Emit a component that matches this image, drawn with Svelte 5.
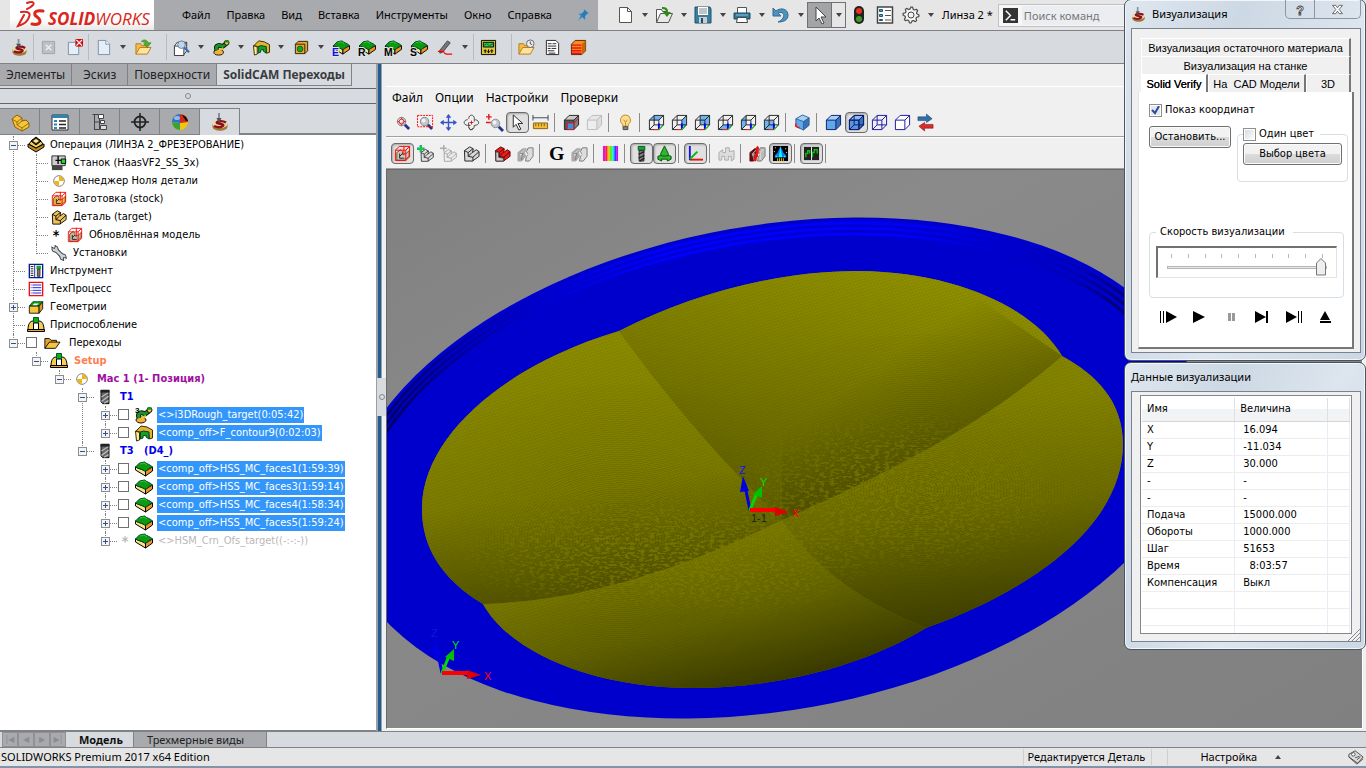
<script>
	let command = $state('');
	let speed = $state(9);
	let showCoordinates = $state(true);
	let oneColor = $state(false);

	const menu = ['Файл', 'Правка', 'Вид', 'Вставка', 'Инструменты', 'Окно', 'Справка'];
	const viewerMenu = ['Файл', 'Опции', 'Настройки', 'Проверки'];
	const ribbonTabs = ['Элементы', 'Эскиз', 'Поверхности', 'SolidCAM Переходы'];
	const panelTabs = ['part', 'props', 'config', 'origin', 'appearance', 'cam'];

	// '|' is a separator, '||' a wide one, 'v' a drop-down arrow
	const quickTools = ['new', 'v', 'openArrow', 'v', 'save', 'v', 'print', 'v', 'undo', 'v'];
	const camTools = [
		'cam', '|', 'closeOff', 'docClose', '|', 'doc', 'v', 'folderArrow', '||',
		'inspect', 'v', 'robot', 'v', 'arch', 'v', 'hole', 'v',
		'slabE', 'slabR', 'slabM', 'slabS', 'pencil', 'v', '|', 'device', '||',
		'folderClock', 'sheet', 'stack'
	];
	const viewTools = [
		'zoomFit', 'zoomArea', 'pan', 'rotate', 'zoomInOut', 'pointer*', 'ruler', '|',
		'section', 'sectionOff', '|', 'bulb', '|',
		'viewTop', 'viewRight', 'viewBack', 'viewBottom', 'viewLeft', 'viewFront', '|',
		'viewIso', '|', 'shaded', 'shadedEdges*', 'wire', 'hidden', 'swap'
	];
	const simTools = [
		'stockBox*', 'partAdd', 'partAddOff', 'partGray', '|', 'partRed', 'partsOff', '|',
		'gouge', 'partsOff', '|', 'rainbow', '|', 'tool*', 'holder*', '|', 'axes*', '|',
		'clampOff', '|', 'compare', 'rocket*', '|', 'chart*', '|'
	];

	const tree = [
		{
			label: 'Операция (ЛИНЗА 2_ФРЕЗЕРОВАНИЕ)', icon: 'operation', open: true,
			children: [
				{ label: 'Станок (HaasVF2_SS_3x)', icon: 'machine' },
				{ label: 'Менеджер Ноля детали', icon: 'zero' },
				{ label: 'Заготовка (stock)', icon: 'stock' },
				{ label: 'Деталь (target)', icon: 'target' },
				{ label: 'Обновлённая модель', icon: 'updated', star: true },
				{ label: 'Установки', icon: 'wrench' }
			]
		},
		{ label: 'Инструмент', icon: 'toolTable' },
		{ label: 'ТехПроцесс', icon: 'process' },
		{ label: 'Геометрии', icon: 'geometry', closed: true },
		{ label: 'Приспособление', icon: 'fixture' },
		{
			label: 'Переходы', icon: 'folder', open: true, check: true, indent: true,
			children: [
				{
					label: 'Setup', icon: 'fixture', kind: 'setup', open: true,
					children: [
						{
							label: 'Mac 1 (1- Позиция)', icon: 'zero', kind: 'mac', open: true,
							children: [
								{
									label: 'T1', icon: 'mill', kind: 'cutter', open: true,
									children: [
										{ label: '<>i3DRough_target(0:05:42)', icon: 'rough', kind: 'selected', closed: true, check: true },
										{ label: '<comp_off>F_contour9(0:02:03)', icon: 'arch', kind: 'selected', closed: true, check: true }
									]
								},
								{
									label: 'T3   (D4_)', icon: 'mill', kind: 'cutter', open: true,
									children: [
										{ label: '<comp_off>HSS_MC_faces1(1:59:39)', icon: 'slab', kind: 'selected', closed: true, check: true },
										{ label: '<comp_off>HSS_MC_faces3(1:59:14)', icon: 'slab', kind: 'selected', closed: true, check: true },
										{ label: '<comp_off>HSS_MC_faces4(1:58:34)', icon: 'slab', kind: 'selected', closed: true, check: true },
										{ label: '<comp_off>HSS_MC_faces5(1:59:24)', icon: 'slab', kind: 'selected', closed: true, check: true },
										{ label: '<>HSM_Crn_Ofs_target((-:-:-))', icon: 'slab', kind: 'off', closed: true, star: true }
									]
								}
							]
						}
					]
				}
			]
		}
	];

	const readings = [
		['X', '16.094'],
		['Y', '-11.034'],
		['Z', '30.000'],
		['-', '-'],
		['-', '-'],
		['Подача', '15000.000'],
		['Обороты', '1000.000'],
		['Шаг', '51653'],
		['Время', '  8:03:57'],
		['Компенсация', 'Выкл'],
		['', ''],
		['', ''],
		['', '']
	];

	const playback = ['stepPlay', 'play', 'pause', 'next', 'playEnd', 'eject'];

	// Icons, all on an 18x18 grid
	const wideIcons = ['operation', 'fixture', 'rough', 'arch', 'slab'];
	const cube = (stroke, fills = '') =>
		`${fills}<path d="M1.5 6.5h10v10h-10zM6.5 1.5h10v10h-10zM1.5 6.5l5-5M11.5 6.5l5-5M1.5 16.5l5-5M11.5 16.5l5-5" fill="none" stroke="${stroke}"/>`;
	const solid = (stroke, a, b, c) =>
		`<path d="M1.5 6.5l5-5h10l-5 5z" fill="${a}"/><path d="M1.5 6.5h10v10h-10z" fill="${b}"/><path d="M11.5 6.5l5-5v10l-5 5z" fill="${c}"/><path d="M1.5 6.5l5-5h10v10l-5 5h-10zM1.5 6.5h10v10M11.5 6.5l5-5" fill="none" stroke="${stroke}"/>`;
	const face = (d) =>
		cube('#222', `<path d="${d}" fill="#6fb2ee"/>`) +
		'<path d="M11.5 10v6.5" stroke="#00f" stroke-width="2"/><path d="M6 16.5h6" stroke="#f22"/><path d="M11.5 16.5l3-3" stroke="#0d0" stroke-width="1.5"/>';
	const slab =
		'<path d="M.5 7v3l10 6v-5z" fill="#fbe47e" stroke="#000"/><path d="M10.5 11v5l7-5V7z" fill="#ee9420" stroke="#000"/><path d="M.5 7l4-4 5-1c2 2 5 2 8 5l-3 1-3 3h-2c-2-2-6-2-9-4z" fill="#0c9a10" stroke="#043"/><path d="M5 4l4-1 3 2" fill="none" stroke="#2ad02a"/>';
	const slabWith = (letter, color) =>
		slab +
		`<text x="-1" y="18" font-size="11" font-weight="700" font-family="Liberation Sans, sans-serif" fill="${color}" stroke="#dfe3e8" stroke-width="2" paint-order="stroke">${letter}</text>`;
	const part = (fill, stroke) =>
		`<path d="M1.5 6l5.500-4 4 2-1 4 4-3 3 2v5l-7 5h-8z" fill="${fill}" stroke="${stroke}"/><path d="M1.5 6l4 2v4l5 1 6.500-6M10.500 13v4M5.500 8l5-4M5.500 12l4-4" fill="none" stroke="${stroke}"/>`;
	const boxed = (fill) =>
		`<path d="M3 8l4-3 2 2v3l4-1 3-3v6l-5 4H3z" fill="${fill}" stroke="#7a4a00"/><path d="M6 9v5h5M6 12l3-3" fill="none" stroke="#222"/><path d="M1.500 5.500h11v11h-11zM1.500 5.500l4-4h11l-4 4M16.500 1.500v11l-4 4M10.500 1v10" fill="none" stroke="#f00"/>`;
	const lens =
		'<circle cx="8" cy="8" r="4.500" fill="#c3c6cc" stroke="#8a8a8a"/><circle cx="7" cy="7" r="2" fill="#f4f4f6"/><path d="M11.500 11.500l4.500 4.500" stroke="#26328c" stroke-width="3"/>';
	const page =
		'<path d="M3.500 1.500h8l4 4v11h-12z" fill="#fff" stroke="#555"/><path d="M11.500 1.500v4h4" fill="none" stroke="#555"/>';
	const folder =
		'<path d="M1 16V5h5l1 2h6v3" fill="#f5bd45" stroke="#b9791a"/><path d="M1 16l4-7h12l-4 7z" fill="#ffe39a" stroke="#b9791a"/>';
	const disc =
		'<path d="M1.500 11v3c1 5 14 5 15 0v-3z" fill="#a07a3a"/><ellipse cx="9" cy="11" rx="7.500" ry="4" fill="#e9d9a6"/><path d="M15 9.500c-3-2-8-1.500-9-.5s1 1.500 4 2 3 1.500 1 2.500-5 1-8-.5" fill="none" stroke="#8e1018" stroke-width="2.400"/><path d="M8 0v5" stroke="#8a9096" stroke-width="2"/><path d="M8 10L5.500 5h5z" fill="#4c5258"/>';
	const robot =
		'<ellipse cx="6" cy="14" rx="5" ry="3" fill="#f3b13c" stroke="#111"/><path d="M4 12c-2-6 3-6 6-4l4-3" fill="none" stroke="#111" stroke-width="5"/><path d="M4 12c-2-6 3-6 6-4l4-3" fill="none" stroke="#129a20" stroke-width="3"/><path d="M6 12l5-2" stroke="#f0c040" stroke-width="2"/><circle cx="14.500" cy="4" r="2.500" fill="#f2c13b" stroke="#111"/><path d="M12.500 2.500h4" stroke="#129a20" stroke-width="2.500"/>';
	const arch =
		'<path d="M1 7l5-5 6 1 5.500 3v8l-3 1-1-7H5z" fill="#e5b32e" stroke="#3a2a00"/><path d="M5.500 15V8l3-1 5.500 1v7l-3-2v-2l-3 1v2z" fill="#13a51c" stroke="#043"/><path d="M.5 7l4 1.500V16l-3 1z" fill="#ffef98" stroke="#3a2a00"/>';
	const halfParts = (a, b) =>
		`<path d="M1 8l5-4 4 0-2 4 1 4-4 5H1z" fill="${a}" stroke="${a}"/><path d="M3 9h3l-1 3v4M12 3l5 0v9l-4 5H9l1-5 2-2-2-3z" fill="${b}" stroke="#777"/><path d="M4 9l4-4M12 8l4-4M12 8v8" stroke="#ddd" fill="none"/>`;
	const zero =
		'<circle cx="9" cy="9" r="6" fill="#fff" stroke="#777"/><path d="M9 9V3.500A5.500 5.500 0 0 1 14.500 9zM9 9v5.500A5.500 5.500 0 0 1 3.500 9z" fill="#f0b51c"/>';
	const fixture =
		'<path d="M1 14c0-6 2-9 5-9h6c3 0 5 3 5 9z" fill="#f4cf54" stroke="#000"/><path d="M6.500 7h5v7h-5z" fill="#fff" stroke="#000"/><path d="M6.500 1.500h5v5h-5z" fill="#0bb40b" stroke="#053"/><path d="M.5 13.500h17v2H.5z" fill="#efa51b" stroke="#000"/>';
	const teeth = Array.from({ length: 32 }, (_, i) => {
		const r = i % 4 < 2 ? 8 : 6;
		const a = (i * Math.PI) / 16;
		return `${9 + r * Math.cos(a)},${9 + r * Math.sin(a)}`;
	}).join(' ');

	const icons = {
		new: page,
		doc: '<path d="M3.500 1.500h8l4 4v11h-12z" fill="#e3eef8" stroke="#7b8ea5"/><path d="M11.500 1.500v4h4" fill="#fff" stroke="#7b8ea5"/>',
		openArrow: '<path d="M1.500 16.500v-13h5l1 2h5" fill="#fff" stroke="#555"/><path d="M1.500 16.500l4-9h12l-4 9z" fill="#e9e9e9" stroke="#555"/><path d="M7 1c4 0 6 1 6 5h3l-4 5-4-5h3c0-2-1-3-4-3z" fill="#2f8a16"/>',
		save: '<path d="M1 1h15l1 2v14H1z" fill="#3a7f9f" stroke="#205068"/><path d="M4 1h10v8H4z" fill="#fff"/><path d="M5 3h8M5 5h8M5 7h8" stroke="#888"/><path d="M5 11h8v6H5z" fill="#c8cdd0"/><path d="M7 12h2v5H7z" fill="#254d61"/>',
		print: '<path d="M4.500 7V1.500h9V7" fill="#fff" stroke="#555"/><path d="M1 7h16v6H1z" fill="#2b7a9c" stroke="#1c4c63"/><path d="M3 9h12" stroke="#8cc4dc"/><path d="M4.500 11.500h9l1 5h-11z" fill="#fff" stroke="#444"/>',
		undo: '<path d="M1 2v8h8L6 7c5-2 7 2 5 5-1 2-3 3-5 4 6 0 10-2 10-7C16 3 9 1 4 5z" fill="#4e92bd" stroke="#2e6a91"/>',
		lights: '<rect x="4" y="0" width="10" height="18" rx="5" fill="#222"/><circle cx="9" cy="5" r="3" fill="#e5331d"/><circle cx="9" cy="13" r="3" fill="#3f9c25"/>',
		list: '<path d="M1.500 1h15v16h-15z" fill="#fff" stroke="#444" stroke-width="1.500"/><path d="M3.500 3.500h3v2h-3zM3.500 8.500h3v2h-3zM3.500 13.500h3v1h-3z" fill="#5aa2c4" stroke="#21566f"/><path d="M9 4.500h6M9 9.500h6M9 14h6" stroke="#555"/>',
		gear: `<polygon points="${teeth}" fill="#f4f4f4" stroke="#4a4a4a" stroke-linejoin="round" stroke-width="1.200"/><circle cx="9" cy="9" r="3" fill="none" stroke="#444"/>`,
		cursor: '<path d="M5 1l0 14 3-3 3 6 2-1-3-6h5z" fill="#fff" stroke="#444"/>',
		pin: '<path d="M10 1l7 6-3 1-2 3v5l-4-4-6 5 4-7-4-3h5l3-3z" fill="#2d7bb0" stroke="#8ac1e5" stroke-width=".6"/>',
		cam: disc,
		closeOff: '<path d="M2.500 2.500h13v13h-13z" fill="#bdbfc2" stroke="#a3a5a8"/><path d="M6 6l6 6M12 6l-6 6" stroke="#eee" stroke-width="1.500"/>',
		docClose: '<path d="M2.500 3.500h11v13h-11z" fill="#e3eef8" stroke="#7b8ea5"/><path d="M10.500.5h7v7h-7z" fill="#e01818" stroke="#b00"/><path d="M11 1l6 6M17 1l-6 6" stroke="#fff" stroke-width="1.200"/>',
		folderArrow: folder + '<path d="M7 2c3-2 6-1 7 2h3l-4 5-4-4h2c-1-2-2-2-4-2z" fill="#4fae2b" stroke="#2b6d12" stroke-width=".5"/>',
		inspect: '<path d="M1.500 7.500h10v10h-10zM1.500 7.500l3-4h10l-3 4M14.500 3.500v9l-3 4" fill="#fff" stroke="#333"/><circle cx="9" cy="6" r="4" fill="#b9d7f0" stroke="#6b7c90"/><path d="M12 9l5 5" stroke="#3b6bae" stroke-width="2.500"/>',
		robot,
		rough: robot + '<text x="0" y="7" font-size="8" font-weight="700" font-family="Liberation Sans, sans-serif">3</text>',
		arch,
		hole: '<path d="M2.500 5.500l3-3h10v10l-3 3h-10z" fill="#f3a41c" stroke="#222"/><path d="M2.500 5.500h10v10" fill="none" stroke="#222"/><circle cx="7.500" cy="10.500" r="3" fill="#19a522" stroke="#063"/>',
		slab,
		slabE: slabWith('E', '#1010e0'),
		slabR: slabWith('R', '#000'),
		slabM: slabWith('M', '#000'),
		slabS: slabWith('S', '#000'),
		pencil: '<path d="M3 12l8-10 3 2-8 10-3 1z" fill="#777" stroke="#444"/><path d="M1 13h6c1 4 4 3 9 3" fill="none" stroke="#f00" stroke-width="1.300"/>',
		device: '<path d="M1.500 1.500h15v15h-15z" fill="#e4c63e" stroke="#000"/><path d="M3.500 3.500h11v5h-11z" fill="#2ccc44" stroke="#000"/><path d="M4 7l3-2 3 2 4-2" stroke="#063" fill="none"/><path d="M5.500 11v4M9 11v4M12.500 11v4M4 12.500h3M7.500 13.500h3M11 12.500h3" stroke="#000"/>',
		folderClock: folder + '<circle cx="13" cy="5" r="4" fill="#eee" stroke="#666"/><path d="M13 2.500V5l2 1" fill="none" stroke="#444"/>',
		sheet: '<path d="M2.500 1.500h10l3 3v12h-13z" fill="#fff" stroke="#222"/><path d="M4 5h4M9 5h4M4 7.500h9M4 10h3M8 10h5M4 12.500h7M5 15h7" stroke="#222"/>',
		stack: '<path d="M1.500 5.500l4-4h11v11l-4 4h-11z" fill="#f3901c" stroke="#5a2000"/><path d="M12.500 5.500l4-4v11l-4 4z" fill="#c8650c"/><path d="M2 6.500h10M2 9.500h10M2 12.500h10M2 15h10" stroke="#e11" stroke-width="1.500"/>',
		part: '<path d="M1 6l5-4 5 3v3l4-1 3 3v4l-7 4-7-4z" fill="#f4c63a" stroke="#8a5c08"/><path d="M1 6l5 3 5-4M6 9v3l5 3v3M11 15l7-5M6 12l5-4" fill="none" stroke="#a06c0a"/>',
		props: '<path d="M1 2h16v15H1z" fill="#fff" stroke="#333"/><path d="M1 2h16v3H1z" fill="#2b86b6"/><path d="M3 7h3v2H3zM3 10.500h3v2H3zM3 14h3v2H3z" fill="#2b86b6"/><path d="M8 8h7M8 11.500h7M8 15h7" stroke="#222" stroke-width="1.500"/>',
		config: '<path d="M3.500 2v15M1.500 1.500h7v15h-5M4 9h5" stroke="#444" fill="none"/><path d="M7.500 1.500h5v4h-5zM9.500 7.500h4v3h-4z" fill="#fff" stroke="#444"/><path d="M9.500 12.500h6v4h-6z" fill="#ddd" stroke="#444"/>',
		origin: '<circle cx="9" cy="9" r="5.500" fill="none" stroke="#222" stroke-width="1.800"/><path d="M9 0v18M0 9h18" stroke="#222" stroke-width="1.500"/>',
		appearance: '<circle cx="9" cy="9" r="8" fill="#f3c414"/><path d="M9 10V17a8 8 0 0 1-8-8z" fill="#3aa338"/><path d="M9 1a8 8 0 0 0-8 8l8 1z" fill="#2d73c9"/><path d="M9 1a8 8 0 0 1 8 8l-8 1z" fill="#d22a1f"/><path d="M11 2l4 6 2 0a8 8 0 0 0-6-6z" fill="#111"/><ellipse cx="6" cy="5" rx="3" ry="2" fill="#fff" opacity=".5"/>',
		zoomFit: lens + '<circle cx="8" cy="8" r="2.500" fill="none" stroke="#d22"/><path d="M8 3.500v2M8 10.500v2M3.500 8h2M10.500 8h2" stroke="#d22"/>',
		zoomArea: lens + '<path d="M.5 1.500h16v12H.5z" fill="none" stroke="#f00" stroke-dasharray="2 1"/>',
		pan: '<path d="M9 1v16M1 9h16" stroke="#3556c8" stroke-width="1.500"/><path d="M9 0l3 4H6zM9 18l-3-4h6zM0 9l4-3v6zM18 9l-4 3V6z" fill="#3556c8"/>',
		rotate: '<path d="M6 5c0-5 6-5 6 0v3M12 12c0 6-6 6-6 1V9M5 6C0 6 0 12 5 12h3M12 12c6 0 6-5 1-6M6 14l2 3 3-2" fill="none" stroke="#444"/><path d="M9 7v4M7 9h4" stroke="#e11"/>',
		zoomInOut: '<g transform="translate(2 2)">' + lens + '</g><path d="M3 0v6M0 3h6M0 9h5" stroke="#e11" stroke-width="1.500"/>',
		pointer: '<path d="M4.500 1v13l3-3 3 6 2-1-3-6h5z" fill="#fff" stroke="#222"/>',
		ruler: '<path d="M1 4h16M1 1v6M17 1v6" stroke="#345"/><path d="M1.500 9.500h15v6h-15z" fill="#f0bd3a" stroke="#8a5c08"/><path d="M4 10v3M7 10v3M10 10v3M13 10v3" stroke="#8a5c08"/>',
		section: solid('#222', '#c9c9c9', '#555', '#7f7f7f') + '<path d="M4.500 9.500h7v7h-7z" fill="#3b8ee0" stroke="#e11"/><path d="M11.500 9.500l5-5" stroke="#e11"/>',
		sectionOff: solid('#bbb', '#e6e6e6', '#eee', '#ddd'),
		bulb: '<path d="M9 1a5.500 5.500 0 0 0-3 10v2h6v-2A5.500 5.500 0 0 0 9 1z" fill="#ffdf8e" stroke="#b7862b"/><path d="M7 6l2 3 2-3M9 9v4" fill="none" stroke="#b7862b"/><path d="M6.500 13.500h5v3h-5z" fill="#888" stroke="#444"/>',
		viewTop: face('M1.500 6.500l5-5h10l-5 5z'),
		viewRight: face('M11.500 6.500l5-5v10l-5 5z'),
		viewBack: face('M6.500 1.500h10v10h-10z'),
		viewBottom: face('M1.500 16.500l5-5h10l-5 5z'),
		viewLeft: face('M1.500 6.500l5-5v10l-5 5z'),
		viewFront: face('M1.500 6.500h10v10h-10z'),
		viewIso: '<path d="M2 5l7-4 7 3-6 4z" fill="#a8d0f5"/><path d="M2 5l8 3v9l-8-4z" fill="#5fa9ea"/><path d="M10 8l6-4v8l-6 5z" fill="#3672bd"/><path d="M2 5l7-4 7 3v8l-6 5-8-4zM2 5l8 3 6-4M10 8v9" fill="none" stroke="#2e6099"/><path d="M2 10v3l4 2" fill="none" stroke="#e11" stroke-width="1.500"/>',
		shaded: solid('#0a1a70', '#a8d0f5', '#5fa9ea', '#3672bd'),
		shadedEdges: solid('#0a1a70', '#8cbcf0', '#5796dd', '#3672bd') + cube('#0a1a70'),
		wire: cube('#1414a0'),
		hidden: solid('#1414a0', '#fff', '#fff', '#fff'),
		swap: '<path d="M1 7V3h9V0l6 5-6 4V7z" fill="#2f6fae" stroke="#1d4568" stroke-width=".6"/><path d="M17 11v4H8v3l-6-5 6-4v2z" fill="#da2b2b" stroke="#7a1010" stroke-width=".6"/>',
		stockBox: boxed('#c9c9c9'),
		partAdd: '<g transform="translate(3 3) scale(.84)">' + part('#e0e0e0', '#222') + '</g><path d="M4 0v8M0 4h8" stroke="#18a0a0" stroke-width="2.500"/><path d="M4 1v6M1 4h6" stroke="#20d020" stroke-width="1.500"/>',
		partAddOff: '<g transform="translate(3 3) scale(.84)">' + part('#eee', '#999') + '</g><path d="M4 0v7M0 3.500h7" stroke="#aaa" stroke-width="1.500"/>',
		partGray: part('#d8d8d8', '#222'),
		partRed: part('#ea1c1c', '#5a0000') + '<path d="M2 7l3 1v5l5 1v3H2z" fill="#ccc" stroke="#444"/>',
		partsOff: halfParts('#aaa', '#ddd'),
		compare: halfParts('#5a1010', '#bbb') + '<path d="M10 2c-4 3 1 5-2 8s0 4-2 7" fill="none" stroke="#e11" stroke-width="3"/>',
		gouge: '<text x="1" y="16" font-size="21" font-weight="700" font-family="Liberation Serif, serif" fill="#000">G</text>',
		rainbow: '<path d="M1 1h3v16H1z" fill="#e018c8"/><path d="M4 1h2v16H4z" fill="#f22"/><path d="M6 1h2v16H6z" fill="#fb0"/><path d="M8 1h3v16H8z" fill="#5e2"/><path d="M11 1h2v16h-2z" fill="#1de"/><path d="M13 1h2v16h-2z" fill="#24f"/><path d="M15 1h2v16h-2z" fill="#b1e"/>',
		tool: '<path d="M5.500 1.500h7v4h-7z" fill="#19a522" stroke="#053"/><path d="M6.500 6h5v11h-5z" fill="#888" stroke="#222"/><path d="M6 10l6-3M6 14l6-3M7 17l5-3" stroke="#222" stroke-width="1.500"/>',
		holder: '<path d="M9 1l4 8v2l3 1v3l-4 2v-2H6v2l-4-2v-3l3-1V9z" fill="#2fb82f" stroke="#064d0a"/><path d="M5 11c2 1 6 1 8 0" fill="none" stroke="#064d0a"/>',
		axes: '<path d="M3 15.500h14" stroke="#e11" stroke-width="2"/><path d="M3 16V1" stroke="#11e" stroke-width="2"/><path d="M3 15L11 7" stroke="#0b0" stroke-width="2"/>',
		clampOff: '<path d="M1 8l4-3v3h3V3h4v4l5-1v9l-3 2v-5h-3v4H7v-4H4v4H1z" fill="#ddd" stroke="#aaa"/>',
		rocket: '<path d="M1 1h16v16H1z" fill="#000"/><path d="M9 1l3 7 3 3v2H3v-2l3-3z" fill="#17e" /><path d="M9 1l1 7 1 5H7l1-5z" fill="#0ff"/><path d="M3 13l2-2 1 2zM12 13l1-2 2 2z" fill="#0ff"/><path d="M6 14v3M8 14v3M10 14v3M12 14v3" stroke="#fb0"/><path d="M3 3h1M14 4h1M2 7h1M15 8h1" stroke="#fff"/>',
		chart: '<path d="M1 2h16v14H1z" fill="#222"/><path d="M3 13V9h2V6h2v3M10 13V8h2V5h3v4" fill="none" stroke="#1b1" stroke-width="1.500"/><path d="M9 2v14" stroke="#eee"/>',
		operation: '<path d="M1 11l8 5 8-5v-3l-8 4-8-4z" fill="#c48a16" stroke="#000"/><path d="M2 8l7 4 7-4-3-4H5z" fill="#f3cf5b" stroke="#000"/><path d="M4 5l5 4 5-4-5-4z" fill="#3a2a04" stroke="#000"/><path d="M6 5l3 2 3-2-3-2z" fill="#ffec9c"/>',
		machine: '<path d="M1 1h15v11H1z" fill="#ccc" stroke="#222"/><path d="M8 1v9M5 6h9" stroke="#000" stroke-width="1.500"/><path d="M1 12h12v5H1z" fill="#444"/><path d="M11.500 4.500h5v5h-5z" fill="#1ce01c" stroke="#000"/>',
		zero,
		stock: boxed('#f1bd4a'),
		target: part('#efc55a', '#000'),
		updated: boxed('#bdb7a8'),
		wrench: '<path d="M5 5l8 8" stroke="#333" stroke-width="5"/><circle cx="4.500" cy="4.500" r="3.500" fill="#c8d4de" stroke="#333"/><circle cx="13.500" cy="13.500" r="3.500" fill="#c8d4de" stroke="#333"/><path d="M5 5l8 8" stroke="#c8d4de" stroke-width="3"/><path d="M0 2l4 2 1-4M18 15l-4-1v4" fill="#fff" stroke="#333"/>',
		toolTable: '<path d="M1.500 1.500h15v15h-15z" fill="#fff" stroke="#0a1a8c" stroke-width="1.500"/><path d="M3 4h3M3 6.500h3M3 9h3M3 11.500h3M3 14h3" stroke="#000"/><path d="M7.500 2v14" stroke="#0a1a8c"/><path d="M9.500 3h5v4h-5z" fill="#19a522"/><path d="M10.500 7h3v8h-3z" fill="#777" stroke="#333"/>',
		process: '<path d="M1.500 1.500h15v15h-15z" fill="#fff" stroke="#e11" stroke-width="1.500"/><path d="M3 4.500h1M3 7.500h1M3 10.500h1M3 13.500h1M5 4.500h10M5 7.500h10M5 10.500h10M5 13.500h10" stroke="#11d"/>',
		geometry: '<path d="M1.500 8l4-5h11l-4 5z" fill="#1b9a1b" stroke="#052"/><path d="M1.500 8h11v8h-11z" fill="#f5c83a" stroke="#111"/><path d="M12.500 8l4-5v8l-4 5z" fill="#d99c20" stroke="#111"/><path d="M5 7l2-2h5l-2 2z" fill="#fff"/>',
		fixture,
		folder: '<path d="M1 15V4h5l2 2h6v3" fill="#e6a52a" stroke="#000"/><path d="M1 15l5-7h12l-5 7z" fill="#f8c440" stroke="#000"/>',
		mill: '<path d="M4.500 1.500h9v15h-7l-2-2z" fill="#666" stroke="#000"/><path d="M5 9l8-5M5 14l8-6M8 16l5-3" stroke="#bbb" stroke-width="1.500"/><path d="M4 1h10v3H4z" fill="#222"/>',
		help: '<text x="4" y="15" font-size="15" font-weight="700" font-family="Liberation Sans, sans-serif" fill="#fff" stroke="#444">?</text>',
		close: '<path d="M3 4h4l2 3 2-3h4l-4 5 4 5h-4l-2-3-2 3H3l4-5z" fill="#fff" stroke="#555"/>',
		stepPlay: '<path d="M1.500 3v12M4.500 3v12" stroke="#000"/><path d="M7 3l11 6-11 6z"/>',
		play: '<path d="M3 3l12 6-12 6z"/>',
		pause: '<path d="M6 5h3v8H6zM10 5h3v8h-3z" fill="#999"/>',
		next: '<path d="M2 3l11 6-11 6zM13 3h2v12h-2z"/>',
		playEnd: '<path d="M1 3l11 6-11 6z"/><path d="M13.500 3v12M16.500 3v12" stroke="#000"/>',
		eject: '<path d="M9 3l5 9H4zM4 13h11v2H4z"/>',
		tag: '<path d="M1 6l7-4 9 7-6 7-10-7z" fill="#ddd" stroke="#444"/><path d="M1 9l9 8 7-6" fill="none" stroke="#444"/><circle cx="6" cy="6" r="2" fill="#fff" stroke="#444"/><path d="M8 10l5-2M10 12l4-3" stroke="#444"/>'
	};

	// Stepped shoulders of the bowl, scaled about its lowest point
	const steps = [0.989, 0.978, 0.967];
	const shoulder = (k) =>
		`matrix(${427 * k} ${-52 * k} 0 ${245 * k} ${681 + 90 * k} ${718 - 250 * k})`;

	// Fine tool passes around the middle of the lens
	const passes = Array.from({ length: 75 }, (_, i) => 6 + i * 3);
	const ticks = Array.from({ length: 10 }, (_, i) => i);
</script>

{#snippet icon(name)}
	<svg class="icon" class:wide={wideIcons.includes(name)} viewBox="0 0 18 18" aria-hidden="true">{@html icons[name]}</svg>
{/snippet}

{#snippet toolbar(items)}
	{#each items as item}
		{#if item === '|'}
			<span class="sep"></span>
		{:else if item === '||'}
			<span class="sep wide"></span>
		{:else if item === 'v'}
			<button class="caret" aria-label="Ещё"></button>
		{:else}
			<button class="tool" class:pressed={item.endsWith('*')} aria-label={item.replace('*', '')}>
				{@render icon(item.replace('*', ''))}
			</button>
		{/if}
	{/each}
{/snippet}

{#snippet branch(nodes)}
	<ul>
		{#each nodes as node}
			<li>
				<div class="row">
					<span class="knot">
						{#if node.open || node.closed}
							<button class="expander" class:closed={node.closed} aria-label="Развернуть"></button>
						{/if}
					</span>
					{#if node.check}
						<input class="mark" type="checkbox" aria-label={node.label} />
					{:else if node.star}
						<span class="star" class:dim={node.kind === 'off'}>*</span>
					{/if}
					{@render icon(node.icon)}
					<span class="label {node.kind ?? ''}" class:indent={node.indent}>{node.label}</span>
				</div>
				{#if node.children}
					{@render branch(node.children)}
				{/if}
			</li>
		{/each}
	</ul>
{/snippet}

{#snippet triad()}
	<path d="M0 0l-5-24" stroke="#0000e0" stroke-width="3" />
	<path d="M-7-34l6 15-9 1z" fill="#0000e0" />
	<path d="M0 0l7-17" stroke="#00d800" stroke-width="3" />
	<path d="M12-24l0 12-9-4z" fill="#00c000" />
	<path d="M0 0h27" stroke="#f00" stroke-width="4" />
	<path d="M39 2l-14 4v-9z" fill="#e00000" />
	<text x="-11" y="-36" fill="#1414e8">Z</text>
	<text x="10" y="-24" fill="#00e000">Y</text>
	<text x="42" y="7" fill="#f00">X</text>
{/snippet}

<div class="app">
	<header class="title-bar">
		<div class="brand">
			<svg viewBox="0 0 30 28" aria-hidden="true">
				<g fill="none" stroke="#d8271c" stroke-linecap="round">
					<path d="M11 3c5-2 8-1 6 2-1 1-3 3-6 4" stroke-width="2" />
					<path d="M5 12c7-1 10 1 8 5-1 4-4 7-11 9l6-11" stroke-width="2" />
					<path d="M27 11c-7-1-9 1-8 4 1 2 5 3 5 6 0 3-3 4-8 3" stroke-width="3" />
				</g>
			</svg>
			<span><b>SOLID</b>WORKS</span>
		</div>
		<nav class="main-menu">
			{#each menu as entry}
				<button>{entry}</button>
			{/each}
			<button class="pin" aria-label="Закрепить">{@render icon('pin')}</button>
		</nav>
		<div class="quick">
			{@render toolbar(quickTools)}
			<div class="select-tool">
				<button class="tool" aria-label="Выбрать">{@render icon('cursor')}</button>
				<button class="caret" aria-label="Ещё"></button>
			</div>
			{@render toolbar(['lights', 'list', 'gear', 'v'])}
			<span class="doc-name">Линза 2 *</span>
			<label class="search">
				<svg viewBox="0 0 16 16" aria-hidden="true">
					<path d="M0 0h16v16H0z" fill="#333" />
					<path d="M3 3l5 5-5 5M8 12.500h5" fill="none" stroke="#fff" stroke-width="1.500" />
				</svg>
				<input placeholder="Поиск команд" aria-label="Поиск команд" bind:value={command} />
			</label>
		</div>
	</header>

	<div class="cam-bar">{@render toolbar(camTools)}</div>

	<main>
		<aside>
			<div class="ribbon">
				{#each ribbonTabs as tab, i}
					<button class:active={i === 3}>{tab}</button>
				{/each}
			</div>
			<div class="grip"><i></i></div>
			<div class="panel-tabs">
				{#each panelTabs as tab, i}
					<button class:active={i === 5} aria-label={tab}>{@render icon(tab)}</button>
				{/each}
			</div>
			<div class="tree">{@render branch(tree)}</div>
		</aside>

		<div class="splitter"><span><i></i></span></div>

		<section class="viewer">
			<div class="blank"></div>
			<nav class="viewer-menu">
				{#each viewerMenu as entry}
					<button>{entry}</button>
				{/each}
			</nav>
			<div class="tools">{@render toolbar(viewTools)}</div>
			<div class="tools second">{@render toolbar(simTools)}</div>
			<div class="canvas">
				<svg viewBox="387 170 975 558" preserveAspectRatio="xMinYMin slice" aria-label="Линза">
					<defs>
						<linearGradient id="back" x1="0" y1="0" x2="1" y2="1">
							<stop offset="0" stop-color="#808080" />
							<stop offset=".3" stop-color="#8a8a8a" />
							<stop offset="1" stop-color="#808080" />
						</linearGradient>
						<linearGradient id="rim" x1="0" y1="0" x2="1" y2="0">
							<stop offset=".05" stop-color="#000070" />
							<stop offset=".14" stop-color="#0000a8" />
							<stop offset=".24" stop-color="#0000d2" />
							<stop offset=".38" stop-color="#0000ff" />
							<stop offset=".66" stop-color="#0000fa" />
							<stop offset=".78" stop-color="#0000cd" />
							<stop offset=".87" stop-color="#0000b4" />
							<stop offset=".92" stop-color="#000078" />
						</linearGradient>
						<linearGradient id="north" gradientUnits="userSpaceOnUse" x1="840" y1="265" x2="790" y2="505">
							<stop offset="0" stop-color="#909000" />
							<stop offset=".5" stop-color="#7a7a00" />
							<stop offset="1" stop-color="#606000" />
						</linearGradient>
						<linearGradient id="seam" gradientUnits="userSpaceOnUse" x1="870" y1="370" x2="930" y2="455">
							<stop offset="0" stop-color="#000" stop-opacity="0" />
							<stop offset="1" stop-color="#000" stop-opacity=".22" />
						</linearGradient>
						<linearGradient id="west" gradientUnits="userSpaceOnUse" x1="580" y1="350" x2="615" y2="600">
							<stop offset="0" stop-color="#8c8c00" />
							<stop offset=".55" stop-color="#7c7c00" />
							<stop offset="1" stop-color="#4e4e00" />
						</linearGradient>
						<linearGradient id="east" gradientUnits="userSpaceOnUse" x1="980" y1="400" x2="1010" y2="620">
							<stop offset="0" stop-color="#858500" />
							<stop offset=".5" stop-color="#6c6c00" />
							<stop offset="1" stop-color="#3c3c00" />
						</linearGradient>
						<linearGradient id="south" gradientUnits="userSpaceOnUse" x1="700" y1="545" x2="735" y2="690">
							<stop offset="0" stop-color="#7c7c00" />
							<stop offset=".5" stop-color="#646400" />
							<stop offset="1" stop-color="#3a3a00" />
						</linearGradient>
						<radialGradient id="haze" gradientUnits="userSpaceOnUse" cx="0" cy="0" r="190">
							<stop offset="0" stop-color="#fff" />
							<stop offset="1" stop-color="#000" />
						</radialGradient>
						<mask id="fade" maskUnits="userSpaceOnUse" x="-400" y="-250" width="800" height="500">
							<circle r="190" fill="url(#haze)" />
						</mask>
						<filter id="grain" x="0" y="0" width="1" height="1">
							<feTurbulence type="fractalNoise" baseFrequency=".2 .42" numOctaves="2" seed="4" />
							<feColorMatrix values="0 0 0 0 .2  0 0 0 0 .2  0 0 0 0 0  0 0 0 8 -4" />
							<feComposite in2="SourceGraphic" operator="in" />
						</filter>
						<radialGradient id="spot">
							<stop offset="0" stop-color="#000" />
							<stop offset=".5" stop-color="#000" stop-opacity=".7" />
							<stop offset="1" stop-color="#000" stop-opacity="0" />
						</radialGradient>
						<pattern id="passA" width="3" height="3" patternUnits="userSpaceOnUse" patternTransform="rotate(-17)">
							<path d="M0 0h3v1H0z" fill="#404000" />
						</pattern>
						<pattern id="passB" width="3" height="3" patternUnits="userSpaceOnUse" patternTransform="rotate(62)">
							<path d="M0 0h3v1H0z" fill="#505000" />
						</pattern>
						<clipPath id="upper"><path d="M386 170h760v300H386z" /></clipPath>
						<clipPath id="lens">
							<path d="M619 331C690 295 775 271 858 271 960 272 1035 310 1062 356 1095 374 1123 400 1123 445 1122 520 1045 585 926 628 865 665 780 688 693 688 590 688 508 650 483 604 440 578 421 545 422 506 424 435 505 365 619 331z" />
						</clipPath>
					</defs>
					<rect x="387" y="170" width="975" height="558" fill="url(#back)" />
					<circle r="1" fill="#0000cd" transform={shoulder(1)} />
					<g clip-path="url(#upper)" fill="none" stroke="url(#rim)" stroke-width="3">
						{#each steps as k}
							<circle r="1" transform={shoulder(k)} vector-effect="non-scaling-stroke" />
						{/each}
					</g>
					<g clip-path="url(#lens)">
						<rect x="400" y="260" width="740" height="440" fill="#686800" />
						<path d="M619 331C665 395 720 460 782 520 920 460 1000 410 1062 356V260H600z" fill="url(#north)" />
						<path d="M782 420V520C920 460 1000 410 1062 356L980 300z" fill="url(#seam)" />
						<path d="M619 331C665 395 720 460 782 520 700 560 600 600 483 604L400 620V300z" fill="url(#west)" />
						<path d="M1062 356C1000 410 920 460 782 520 820 575 870 605 926 628L1140 640V330z" fill="url(#east)" />
						<path d="M483 604C600 600 700 560 782 520 820 575 870 605 926 628L920 700H460z" fill="url(#south)" />
						<g shape-rendering="crispEdges">
							<rect x="400" y="260" width="740" height="440" fill="url(#passA)" opacity=".1" />
							<rect x="400" y="260" width="740" height="440" fill="url(#passB)" opacity=".1" />
						</g>
						<g transform="translate(620 540)">
							<g mask="url(#fade)" fill="none" stroke="#3c3c00" opacity=".2" shape-rendering="crispEdges">
								{#each passes as r}<ellipse rx={r} ry={r * 0.68} />{/each}
							</g>
						</g>
						<g transform="translate(920 490)">
							<g mask="url(#fade)" fill="none" stroke="#3c3c00" opacity=".2" shape-rendering="crispEdges">
								{#each passes as r}<ellipse rx={r} ry={r * 0.68} />{/each}
							</g>
						</g>
						<g fill="url(#spot)" opacity=".75">
							<ellipse cx="610" cy="545" rx="170" ry="75" filter="url(#grain)" />
							<ellipse cx="730" cy="560" rx="150" ry="60" filter="url(#grain)" />
							<ellipse cx="900" cy="490" rx="190" ry="90" filter="url(#grain)" />
						</g>
					</g>
					<text class="origin" x="751" y="522" fill="#222">1-1</text>
					<g class="triad" transform="translate(750 510)">{@render triad()}</g>
					<g class="triad" transform="translate(442 673)">{@render triad()}</g>
				</svg>
			</div>
		</section>
	</main>

	<div class="sheet-tabs">
		<div class="steps">
			{#each ['|◀', '◀', '▶', '▶|'] as arrow}
				<button>{arrow}</button>
			{/each}
		</div>
		<button class="active">Модель</button>
		<button>Трехмерные виды</button>
	</div>

	<footer>
		<span class="edition">SOLIDWORKS Premium 2017 x64 Edition</span>
		<span class="state">Редактируется Деталь</span>
		<button class="units">Настройка <i></i></button>
		{@render icon('tag')}
	</footer>

	<div class="dialogs">
		<section class="dialog">
			<header>
				{@render icon('cam')}
				<h2>Визуализация</h2>
				<div class="window-buttons">
					<button aria-label="Справка">{@render icon('help')}</button>
					<button aria-label="Закрыть">{@render icon('close')}</button>
				</div>
			</header>
			<div class="client">
				<div class="sim-tabs">
					<button class="full">Визуализация остаточного материала</button>
					<button class="full">Визуализация на станке</button>
					<button class="active">Solid Verify</button>
					<button>На&nbsp; CAD Модели</button>
					<button>3D</button>
				</div>
				<div class="page">
					<label class="check"><input type="checkbox" bind:checked={showCoordinates} />Показ координат</label>
					<div class="pair">
						<button class="push">Остановить...</button>
						<fieldset>
							<legend><label class="check"><input type="checkbox" bind:checked={oneColor} />Один цвет</label></legend>
							<button class="push">Выбор цвета</button>
						</fieldset>
					</div>
					<fieldset class="speed">
						<legend><label for="speed">Скорость визуализации</label></legend>
						<div class="track">
							<div class="ticks">
								{#each ticks as tick (tick)}<i></i>{/each}
							</div>
							<input id="speed" type="range" min="0" max="9" bind:value={speed} />
						</div>
					</fieldset>
					<div class="playback">
						{#each playback as name}
							<button aria-label={name} disabled={name === 'pause'}>{@render icon(name)}</button>
						{/each}
					</div>
				</div>
			</div>
		</section>

		<section class="dialog">
			<header><h2>Данные визуализации</h2></header>
			<div class="client data">
				<div class="list">
					<table>
						<thead>
							<tr><th>Имя</th><th>Величина</th><th class="rest"></th></tr>
						</thead>
						<tbody>
							{#each readings as [name, value]}
								<tr><td>{name}</td><td class="value">{value}</td><td></td></tr>
							{/each}
						</tbody>
					</table>
				</div>
				<svg class="resize" viewBox="0 0 12 12" aria-hidden="true">
					<path d="M0 12L12 0M4 12l8-8M8 12l4-4" stroke="#888" />
				</svg>
			</div>
		</section>
	</div>
</div>

<style>
	:global(body) {
		margin: 0;
	}

	.app {
		--bar: #d7dbe0;
		--tab: #a9aaae;
		--edge: #808285;
		--small: 'DejaVu Sans Condensed', 'DejaVu Sans', sans-serif;
		position: relative;
		display: flex;
		flex-direction: column;
		height: 100vh;
		overflow: hidden;
		background: var(--bar);
		color: #000;
		font: 11px/16px 'Noto Sans', 'Open Sans', sans-serif;
	}

	.app * {
		box-sizing: border-box;
	}

	button,
	input {
		margin: 0;
		padding: 0;
		border: 0;
		background: none;
		color: inherit;
		font: inherit;
	}

	.icon {
		width: 18px;
		height: 18px;
		flex: none;
		overflow: visible;
	}

	/* Title bar */
	.title-bar {
		display: flex;
		flex: none;
		height: 31px;
		border-bottom: 1px solid var(--edge);
		background: var(--tab);
	}

	.brand {
		display: flex;
		width: 154px;
		flex: none;
		border-left: 10px solid #e6e6e6;
		background: linear-gradient(#fff 60%, #e8e8e8);
		color: #d8271c;
		font: italic 17px/38px 'Open Sans', sans-serif;
		white-space: nowrap;
	}

	.brand svg {
		width: 30px;
		height: 28px;
		margin: 0 2px 0 6px;
		flex: none;
	}

	.main-menu {
		display: flex;
		align-items: center;
		gap: 16px;
		width: 444px;
		padding-left: 28px;
		flex: none;
	}

	.main-menu .pin {
		display: flex;
		margin-left: 8px;
	}

	.pin .icon {
		width: 14px;
		height: 14px;
	}

	.quick {
		display: flex;
		align-items: center;
		flex: 1;
		padding-left: 14px;
		background: #e6e6e6;
	}

	.tool {
		display: flex;
		align-items: center;
		justify-content: center;
		width: 26px;
		height: 24px;
		flex: none;
	}

	.caret {
		display: flex;
		align-items: center;
		justify-content: center;
		width: 13px;
		height: 24px;
		flex: none;
	}

	.caret::after {
		border: 3px solid transparent;
		border-top: 4px solid #444;
		border-bottom: 0;
		content: '';
	}

	.select-tool {
		display: flex;
		border: 1px solid #6f7174;
	}

	.select-tool .tool {
		width: 24px;
		border-right: 1px solid #6f7174;
		background: #a3a4a6;
	}

	.doc-name {
		margin: 0 5px;
		white-space: nowrap;
	}

	.search {
		display: flex;
		align-items: center;
		gap: 4px;
		flex: 1;
		height: 23px;
		padding: 1px 4px;
		border: 1px solid #bfc1c4;
		background: #f6f6f6;
	}

	.search svg {
		width: 15px;
		height: 15px;
	}

	.search input {
		flex: 1;
		height: 19px;
		padding-left: 2px;
		background: #ebedf1;
	}

	.search input::placeholder {
		color: #777;
	}

	/* CAM toolbar */
	.cam-bar {
		display: flex;
		align-items: center;
		flex: none;
		height: 33px;
		padding-left: 6px;
		border-bottom: 1px solid var(--edge);
	}

	.cam-bar .caret {
		width: 14px;
	}

	.cam-bar .icon {
		width: 17px;
		height: 17px;
	}

	.sep {
		width: 1px;
		height: 26px;
		margin: 0 1px;
		flex: none;
		background: #b7babe;
	}

	.sep.wide {
		margin: 0 1px 0 10px;
	}

	main {
		display: flex;
		flex: 1;
		min-height: 0;
	}

	/* Feature manager */
	aside {
		display: flex;
		flex-direction: column;
		width: 376px;
		flex: none;
		border-bottom: 1px solid var(--edge);
	}

	.ribbon {
		display: flex;
		flex: none;
		height: 22px;
		font-size: 12px;
	}

	.ribbon button {
		min-width: 56px;
		padding: 0 6px;
		border-right: 1px solid var(--edge);
		border-bottom: 1px solid var(--edge);
		background: var(--tab);
		white-space: nowrap;
		color: #222;
	}

	.ribbon .active {
		background: var(--bar);
		color: #3a3c40;
		font-weight: 700;
	}

	.grip {
		display: flex;
		align-items: center;
		justify-content: center;
		flex: none;
		height: 16px;
		margin: 2px 0 4px;
		border: solid #62666f;
		border-width: 1px 0;
	}

	.grip i,
	.splitter i {
		width: 6px;
		height: 6px;
		border: 1px solid #888;
		border-radius: 50%;
	}

	.panel-tabs {
		display: flex;
		flex: none;
		height: 27px;
		border-bottom: 2px solid var(--edge);
	}

	.panel-tabs button {
		display: flex;
		align-items: center;
		justify-content: center;
		width: 40px;
		height: 26px;
		border: solid var(--edge);
		border-width: 1px 1px 0 0;
		background: var(--tab);
	}

	.panel-tabs .active {
		height: 27px;
		background: var(--bar);
	}

	.tree {
		flex: 1;
		min-height: 0;
		overflow: hidden;
		padding: 1px 0 0 2px;
		background: #fff;
		font: 11px/16px var(--small);
	}

	ul {
		margin: 0;
		padding: 0;
		list-style: none;
	}

	li {
		position: relative;
	}

	li > :global(ul) {
		padding-left: 23px;
	}

	li::before {
		position: absolute;
		top: 0;
		bottom: 0;
		left: 11px;
		border-left: 1px dotted #808080;
		content: '';
	}

	li:last-child::before {
		bottom: auto;
		height: 10px;
	}

	.row {
		display: flex;
		align-items: center;
		height: 18px;
	}

	.row .icon {
		width: 16px;
		height: 16px;
		margin: 0 3px;
	}

	.row .icon.wide {
		width: 20px;
		height: 18px;
		margin: 0 1px;
	}

	.knot {
		position: relative;
		display: flex;
		align-items: center;
		width: 23px;
		height: 18px;
		padding-left: 7px;
		flex: none;
	}

	.knot::before {
		position: absolute;
		top: 9px;
		right: 0;
		left: 12px;
		border-top: 1px dotted #808080;
		content: '';
	}

	.expander {
		position: relative;
		width: 9px;
		height: 9px;
		border: 1px solid #8d8d8d;
		background: linear-gradient(#2c4f9c, #2c4f9c) center / 5px 1px no-repeat, #f4f4f4;
	}

	.expander.closed {
		background:
			linear-gradient(#2c4f9c, #2c4f9c) center / 5px 1px no-repeat,
			linear-gradient(#2c4f9c, #2c4f9c) center / 1px 5px no-repeat,
			#f4f4f4;
	}

	.mark {
		appearance: none;
		width: 11px;
		height: 11px;
		margin: 0 4px 2px 1px;
		flex: none;
		border: 1px solid #707070;
		background: #fff;
	}

	.star {
		width: 16px;
		flex: none;
		font-size: 14px;
		font-weight: 700;
		text-align: center;
	}

	.star.dim,
	.label.off {
		color: #b9b9b9;
	}

	.label {
		padding: 0 1px 0 3px;
		white-space: pre;
	}

	.label.indent {
		padding-left: 6px;
	}

	.label.selected {
		margin-left: 2px;
		padding-left: 1px;
		background: #3296fa;
		color: #fff;
	}

	.label.setup,
	.label.mac,
	.label.cutter {
		padding-left: 4px;
		font-weight: 700;
	}

	.label.setup {
		color: #ff7f50;
	}

	.label.mac {
		color: #a010a0;
	}

	.label.cutter {
		color: #0000f0;
	}

	.splitter {
		position: relative;
		width: 6px;
		flex: none;
		border: solid #9b9ea3;
		border-width: 0 1px 0 2px;
		background: #235c93;
	}

	.splitter span {
		position: absolute;
		top: 314px;
		left: -1px;
		z-index: 1;
		display: flex;
		align-items: center;
		justify-content: center;
		width: 9px;
		height: 38px;
		background: var(--bar);
	}

	/* Simulation window */
	.viewer {
		display: flex;
		flex: 1;
		flex-direction: column;
		min-width: 0;
		padding: 0 3px 2px 4px;
		background: #f0f0f0;
	}

	.blank {
		height: 23px;
		flex: none;
		border-bottom: 1px solid #fff;
	}

	.viewer-menu {
		display: flex;
		gap: 12px;
		flex: none;
		height: 21px;
		padding-left: 6px;
		font-size: 12px;
	}

	.tools {
		display: flex;
		align-items: center;
		flex: none;
		height: 29px;
		padding-left: 5px;
		border-bottom: 1px solid #a0a0a0;
	}

	.tools.second {
		height: 32px;
		border-top: 1px solid #fff;
	}

	.tools .tool {
		width: 23px;
		height: 21px;
	}

	.tools .icon {
		width: 17px;
		height: 17px;
	}

	.tools .sep {
		height: 19px;
		margin: 0 5px 0 2px;
		background: #8c8c8c;
	}

	.tools .pressed {
		border: 1px solid #6b6b6b;
		border-radius: 4px;
		background: #e0e0e0;
		box-shadow: inset 1px 1px 2px #a8a8a8;
	}

	.canvas {
		flex: 1;
		min-height: 0;
		border: 1px solid #696969;
		border-color: #696969 #fff #fff #696969;
	}

	.canvas svg {
		display: block;
		width: 100%;
		height: 100%;
	}

	.triad,
	.origin {
		font: 11px 'Liberation Sans', sans-serif;
	}

	/* Bottom bars */
	.sheet-tabs {
		display: flex;
		flex: none;
		height: 17px;
		border: solid var(--edge);
		border-width: 1px 0;
		color: #222;
		line-height: 14px;
	}

	.sheet-tabs > button {
		padding: 0 22px 0 13px;
		border-right: 1px solid var(--edge);
		background: var(--tab);
	}

	.sheet-tabs > .active {
		padding: 0 10px 0 13px;
		background: var(--bar);
		color: #111;
		font-weight: 700;
	}

	.steps {
		display: flex;
		margin-left: 2px;
		background: var(--tab);
		color: #8b8d91;
		font: 8px/12px 'DejaVu Sans', sans-serif;
	}

	.steps button {
		width: 16px;
		border: 1px solid #8f9194;
	}

	footer {
		display: flex;
		align-items: center;
		flex: none;
		height: 20px;
		padding: 0 2px 0 1px;
		border-bottom: 2px solid #8195a8;
		background: #e6e6e6;
	}

	.edition {
		flex: 1;
	}

	.state {
		padding: 0 6px 0 4px;
		border: solid #cfcfcf;
		border-width: 0 1px;
	}

	.units {
		display: flex;
		align-items: center;
		gap: 18px;
		margin: 0 67px 0 15px;
		padding-left: 32px;
		border-left: 1px solid #cfcfcf;
	}

	.units i {
		border: 3px solid transparent;
		border-top: 0;
		border-bottom: 4px solid #444;
	}

	footer .icon {
		width: 16px;
		height: 16px;
	}

	/* Floating windows */
	.dialogs {
		position: absolute;
		top: -1px;
		right: 0;
		display: flex;
		flex-direction: column;
		gap: 1px;
		width: 242px;
	}

	.dialog {
		padding: 0 4px 7px 6px;
		border: 1px solid #4b5560;
		border-radius: 7px;
		background: linear-gradient(115deg, #dfe7ef, #ccd8e4 30%, #dde5ee 60%, #cbd7e3);
		box-shadow: inset 0 0 0 1px #f2f6fa;
	}

	.dialog header {
		display: flex;
		align-items: center;
		gap: 6px;
		height: 28px;
	}

	.dialog header .icon {
		width: 15px;
		height: 15px;
	}

	h2 {
		flex: 1;
		margin: 0;
		font-size: 11px;
		font-weight: 400;
	}

	.window-buttons {
		display: flex;
		align-self: flex-start;
		border: 1px solid #8a96a3;
		border-top: 0;
		border-radius: 0 0 5px 5px;
	}

	.window-buttons button {
		display: flex;
		align-items: center;
		justify-content: center;
		width: 28px;
		height: 18px;
	}

	.window-buttons button + button {
		width: 46px;
		border-left: 1px solid #8a96a3;
	}

	.client {
		padding: 9px 6px 3px;
		border: 1px solid #7a838d;
		background: #f0f0f0;
		font: 11px/16px var(--small);
	}

	.sim-tabs {
		display: flex;
		flex-wrap: wrap;
		padding: 0 3px;
		font: 11px/16px 'Liberation Sans', sans-serif;
	}

	.sim-tabs button {
		height: 18px;
		flex: 1 1 0;
		border: solid #fff;
		border-width: 1px 2px 0 1px;
		border-right-color: #777;
		white-space: nowrap;
	}

	.sim-tabs .full {
		flex: 1 0 100%;
	}

	.sim-tabs button:nth-child(4) {
		flex: 0 0 98px;
	}

	.sim-tabs button:nth-child(5) {
		flex: 0 0 45px;
	}

	.sim-tabs .active {
		background: #fff;
		text-shadow: 0 0 0 #000;
	}

	.page {
		height: 257px;
		padding: 10px 8px 0 10px;
		border: solid #777;
		border-width: 0 2px 2px 1px;
		border-left-color: #e4e4e4;
		background: #fff;
	}

	.check {
		display: flex;
		align-items: center;
		gap: 3px;
	}

	.check input {
		appearance: none;
		width: 13px;
		height: 13px;
		border: 1px solid #8e8f8f;
		background: linear-gradient(135deg, #d4d8de, #fff);
		box-shadow: inset 0 0 0 1px #fff;
	}

	.check input:checked {
		background: url("data:image/svg+xml,%3Csvg xmlns='http://www.w3.org/2000/svg' viewBox='0 0 11 11'%3E%3Cpath d='M2 5l3 3 4-7' fill='none' stroke='%23324b96' stroke-width='2'/%3E%3C/svg%3E") #e4e8ee;
	}

	.pair {
		display: flex;
		align-items: flex-start;
		justify-content: space-between;
		margin-top: 8px;
	}

	.push {
		height: 22px;
		border: 1px solid #707070;
		border-radius: 3px;
		background: linear-gradient(#f2f2f2 50%, #dcdcdc 50%, #cfcfcf);
		box-shadow: inset 0 0 0 1px #fbfbfb;
		white-space: nowrap;
	}

	.pair > .push {
		width: 82px;
	}

	fieldset {
		min-width: 0;
		margin: 0;
		border: 1px solid #d5dfe5;
		border-radius: 4px;
	}

	.pair fieldset {
		width: 111px;
		height: 56px;
		margin-right: -4px;
		padding: 1px 5px 0;
	}

	.pair legend {
		padding: 0 6px 0 0;
	}

	.pair fieldset .push {
		width: 100%;
	}

	.speed {
		height: 74px;
		margin-top: 42px;
		padding: 6px 6px 0;
	}

	.speed legend {
		padding: 0 8px 0 4px;
	}

	.track {
		height: 32px;
		padding: 6px 9px 0;
		border: 2px solid #707070;
		border-color: #707070 #e3e3e3 #e3e3e3 #707070;
		border-width: 2px 1px 1px 2px;
	}

	.ticks {
		display: flex;
		justify-content: space-between;
		padding: 0 4px;
	}

	.ticks i {
		width: 1px;
		height: 4px;
		background: #b8b8b8;
	}

	.track input {
		appearance: none;
		display: block;
		width: 100%;
		height: 19px;
	}

	.track input::-webkit-slider-runnable-track {
		height: 3px;
		border: 1px solid #b5b5b5;
		background: #e7eaea;
	}

	.track input::-webkit-slider-thumb {
		appearance: none;
		width: 10px;
		height: 18px;
		margin-top: -9px;
		background: url("data:image/svg+xml,%3Csvg xmlns='http://www.w3.org/2000/svg' viewBox='0 0 10 18'%3E%3Cpath d='M.5 5L5 .5 9.500 5v12H.5z' fill='%23eee' stroke='%23777'/%3E%3C/svg%3E");
	}

	.playback {
		display: flex;
		justify-content: space-between;
		margin: 10px 10px 0 10px;
	}

	.playback button {
		display: flex;
	}

	.data {
		position: relative;
		padding: 3px 8px 7px;
	}

	.list {
		height: 239px;
		overflow: hidden;
		padding: 2px 1px;
		border: 1px solid #828790;
		background: #fff;
	}

	table {
		width: 100%;
		border-collapse: collapse;
		table-layout: fixed;
	}

	th {
		height: 23px;
		padding: 0 5px;
		border-right: 1px solid #dfe0e2;
		border-bottom: 1px solid #d5d5d5;
		background: linear-gradient(#fff 50%, #f2f3f5 50%);
		font-weight: 400;
		text-align: left;
	}

	th.rest {
		width: 22px;
	}

	td {
		height: 17px;
		padding: 0 5px;
		border-right: 1px solid #e6edf5;
		border-bottom: 1px solid #ededed;
		line-height: 16px;
		white-space: pre;
	}

	td.value {
		padding-left: 8px;
	}

	.resize {
		position: absolute;
		right: 0;
		bottom: 0;
		width: 12px;
		height: 12px;
	}
</style>
